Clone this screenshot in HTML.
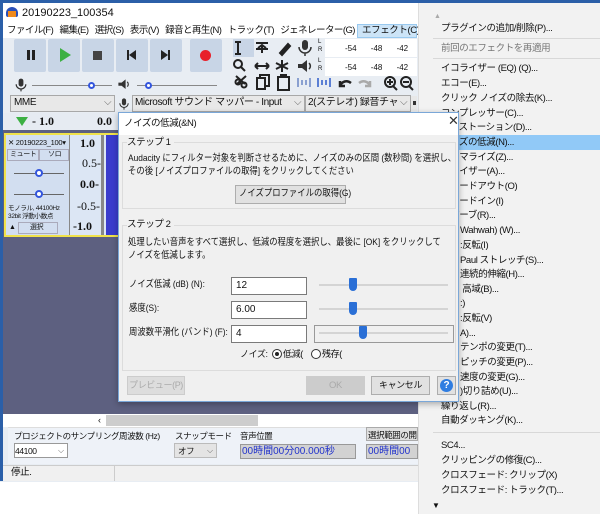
<!DOCTYPE html>
<html><head><meta charset="utf-8"><style>
*{margin:0;padding:0;box-sizing:border-box}
body{width:600px;height:514px;overflow:hidden;background:#fff;position:relative;font-family:"Liberation Sans","Noto Sans CJK JP",sans-serif;font-size:10px;color:#111}
.a{position:absolute}
.btn{position:absolute;background:#c8d5e6;border-radius:2px}
.t{position:absolute;white-space:nowrap;line-height:12px;letter-spacing:-0.4px}
.sx{letter-spacing:0;transform:scaleX(0.88);transform-origin:0 0;font-size:9.5px}
.cb{position:absolute;background:#fff;border:1px solid #a8a8a8;height:17px}
.mi{position:absolute;left:441px;font-size:9.5px;white-space:nowrap;line-height:12px;letter-spacing:-0.4px}
.sep{position:absolute;left:433px;width:167px;height:1px;background:#d8d8d8}
.inp{position:absolute;background:#fff;border:1px solid #7a7a7a;height:18px;padding-left:4px;line-height:16px;font-size:10px}
.trk{position:absolute;height:2px;background:#d4d4d4}
.th{position:absolute;width:8px;height:13px;background:#2a6fd6;border-radius:1px 1px 4px 4px}
.db{position:absolute;background:#e1e1e1;border:1px solid #adadad;text-align:center;line-height:17px;font-size:9.5px;white-space:nowrap;letter-spacing:-0.4px}
.ic{position:absolute}
</style></head><body>
<div class="a" style="left:0;top:0;width:418px;height:482px;background:#e8edf3"></div>
<div class="a" style="left:0;top:0;width:600px;height:3px;background:#2b5fa8"></div>
<div class="a" style="left:0;top:3px;width:418px;height:22px;background:#fff"></div>
<div class="a" style="left:6px;top:7px;width:12px;height:10px;border-radius:6px 6px 2px 2px;background:#2a50b8"></div>
<div class="a" style="left:8px;top:11px;width:8px;height:6px;background:#f08a1d"></div>
<div class="t" style="left:22px;top:7px;font-size:11px;letter-spacing:0">20190223_100354</div>
<div class="a" style="left:0;top:25px;width:418px;height:13px;background:#fff"></div>
<div class="t" style="left:7px;top:25px;font-size:9.5px;letter-spacing:-0.55px">ファイル(F)&nbsp;&nbsp; 編集(E)&nbsp;&nbsp; 選択(S)&nbsp;&nbsp; 表示(V)&nbsp;&nbsp; 録音と再生(N)&nbsp;&nbsp; トラック(T)&nbsp;&nbsp; ジェネレーター(G)</div>
<div class="a" style="left:357px;top:24px;width:60px;height:14px;background:#cce4f7;border:1px solid #99c9ef"></div>
<div class="t" style="left:362px;top:25px;font-size:9.5px">エフェクト(C)</div>
<div class="btn" style="left:14px;top:39px;width:32px;height:33px"></div>
<div class="btn" style="left:48px;top:39px;width:32px;height:33px"></div>
<div class="btn" style="left:82px;top:39px;width:32px;height:33px"></div>
<div class="btn" style="left:116px;top:39px;width:32px;height:33px"></div>
<div class="btn" style="left:150px;top:39px;width:32px;height:33px"></div>
<div class="btn" style="left:190px;top:39px;width:32px;height:33px"></div>
<div class="a" style="left:27px;top:50px;width:3px;height:10px;background:#222"></div><div class="a" style="left:32px;top:50px;width:3px;height:10px;background:#222"></div>
<div class="a" style="left:60px;top:48px;border-left:11px solid #3cb043;border-top:7px solid transparent;border-bottom:7px solid transparent"></div>
<div class="a" style="left:93px;top:51px;width:9px;height:9px;background:#444"></div>
<div class="a" style="left:127px;top:50px;width:2px;height:10px;background:#222"></div><div class="a" style="left:129px;top:50px;border-right:7px solid #222;border-top:5px solid transparent;border-bottom:5px solid transparent"></div>
<div class="a" style="left:161px;top:50px;border-left:7px solid #222;border-top:5px solid transparent;border-bottom:5px solid transparent"></div><div class="a" style="left:168px;top:50px;width:2px;height:10px;background:#222"></div>
<div class="a" style="left:200px;top:50px;width:11px;height:11px;border-radius:50%;background:#e8202a"></div>
<div class="a" style="left:233px;top:39px;width:21px;height:18px;background:#c8d5e6"></div>
<svg class="ic" style="left:230px;top:38px" width="190" height="58" viewBox="0 0 190 58" fill="none" stroke="#222" stroke-width="2">
<path d="M8 4v12M5 4h6M5 16h6"/>
<path d="M26 5h12M32 7v8M28 10l4-3 4 3M26 11h12"/>
<path d="M50 15l8-9 2 2-8 9z" fill="#222"/>
<circle cx="8" cy="26" r="4"/><path d="M11 29l4 4"/>
<path d="M25 28h14M25 28l3-3M25 28l3 3M39 28l-3-3M39 28l-3 3"/>
<path d="M52 22v12M46 25l12 6M46 31l12-6"/>
<circle cx="8" cy="44" r="2.5"/><circle cx="14" cy="47" r="2.5"/><path d="M6 38l9 8M16 38l-9 8"/>
<rect x="27" y="40" width="8" height="11"/><path d="M30 40v-3h9v11h-3"/>
<rect x="48" y="39" width="11" height="13"/><path d="M51 39v-2h5v2"/>
<path d="M68 40v9M80 40v9M72 42v5M76 42v5" stroke="#8aa0d0"/>
<path d="M88 40v9M100 40v9M92 42v5M96 42v5" stroke="#5b7fd4"/>
<path d="M110 48c2-5 7-6 11-3M110 43v5h5" stroke-width="2.5"/>
<path d="M140 48c-2-5-7-6-11-3M140 43v5h-5" stroke="#aaa" stroke-width="2.5"/>
<circle cx="160" cy="44" r="5"/><path d="M163 48l4 4M157 44h6M160 41v6"/>
<circle cx="176" cy="44" r="5"/><path d="M179 48l4 4M173 44h6"/>
</svg>
<svg class="ic" style="left:295px;top:38px" width="20" height="40" viewBox="0 0 20 40" fill="#333"><rect x="7" y="2" width="6" height="10" rx="3"/><path d="M4 9a6 6 0 0012 0M10 15v3" stroke="#333" fill="none" stroke-width="1.5"/><path d="M3 26h4l5-4v12l-5-4H3z"/><path d="M14 25a4 4 0 010 6" stroke="#333" fill="none" stroke-width="1.5"/></svg>
<div class="a" style="left:325px;top:39px;width:92px;height:18px;background:#fff"></div>
<div class="a" style="left:325px;top:58px;width:92px;height:18px;background:#fff"></div>
<div class="t" style="left:345px;top:43px;font-size:8px;word-spacing:12px;letter-spacing:0">-54 -48 -42</div>
<div class="t" style="left:345px;top:62px;font-size:8px;word-spacing:12px;letter-spacing:0">-54 -48 -42</div>
<div class="t" style="left:318px;top:38px;font-size:6px;line-height:8px">L<br>R</div>
<div class="t" style="left:318px;top:57px;font-size:6px;line-height:8px">L<br>R</div>
<svg class="ic" style="left:13px;top:76px" width="16" height="18" viewBox="0 0 20 20" fill="#333"><rect x="7" y="2" width="6" height="10" rx="3"/><path d="M4 9a6 6 0 0012 0M10 15v3" stroke="#333" fill="none" stroke-width="1.5"/></svg>
<div class="a" style="left:32px;top:85px;width:80px;height:1px;background:#888"></div>
<div class="a" style="left:88px;top:82px;width:7px;height:7px;border-radius:50%;border:2px solid #3355dd;background:#fff"></div>
<svg class="ic" style="left:116px;top:77px" width="16" height="16" viewBox="0 0 20 20" fill="#333"><path d="M3 7h4l5-4v12l-5-4H3z"/><path d="M14 6a4 4 0 010 6" stroke="#333" fill="none" stroke-width="1.5"/></svg>
<div class="a" style="left:137px;top:85px;width:80px;height:1px;background:#888"></div>
<div class="a" style="left:145px;top:82px;width:7px;height:7px;border-radius:50%;border:2px solid #3355dd;background:#fff"></div>
<div class="cb" style="left:10px;top:95px;width:105px;background:#e8e8e8"></div><div class="t" style="left:14px;top:97px">MME</div><div class="t" style="left:104px;top:97px;color:#666">⌵</div>
<svg class="ic" style="left:117px;top:95px" width="14" height="18" viewBox="0 0 20 20" fill="#333"><rect x="7" y="2" width="6" height="10" rx="3"/><path d="M4 9a6 6 0 0012 0M10 15v3" stroke="#333" fill="none" stroke-width="1.5"/></svg>
<div class="cb" style="left:132px;top:95px;width:173px;background:#e8e8e8"></div><div class="t" style="left:135px;top:97px">Microsoft サウンド マッパー - Input</div><div class="t" style="left:294px;top:97px;color:#666">⌵</div>
<div class="cb" style="left:305px;top:95px;width:106px;background:#e8e8e8;overflow:hidden"></div><div class="t" style="left:308px;top:97px;width:90px;overflow:hidden">2(ステレオ) 録音チャンネル</div><div class="t" style="left:400px;top:97px;color:#666">⌵</div>
<div class="a" style="left:411px;top:96px;width:6px;height:15px;background:#e8e8e8"></div><div class="a" style="left:413px;top:101px;width:3px;height:4px;background:#333"></div>
<div class="a" style="left:3px;top:113px;width:415px;height:17px;background:#e6ebf2"></div>
<div class="a" style="left:16px;top:117px;border-top:9px solid #3cb043;border-left:6px solid transparent;border-right:6px solid transparent"></div>
<div class="t" style="left:32px;top:115px;font-family:'Liberation Serif',serif;font-size:12px;font-weight:bold;letter-spacing:0">- 1.0</div>
<div class="t" style="left:97px;top:115px;font-family:'Liberation Serif',serif;font-size:12px;font-weight:bold;letter-spacing:0">0.0</div>
<div class="a" style="left:3px;top:130px;width:415px;height:284px;background:#5d6080"></div>
<div class="a" style="left:0;top:3px;width:3px;height:478px;background:#2b5fa8"></div>
<div class="a" style="left:4px;top:133px;width:352px;height:104px;border:2px solid #f0e24a;background:#dce6f4"></div>
<div class="a" style="left:6px;top:135px;width:64px;height:100px;background:#d2def0;border-right:1px solid #888"></div>
<div class="t" style="left:8px;top:137px;font-size:7.5px;letter-spacing:-0.3px">✕ 20190223_100▾</div>
<div class="a" style="left:7px;top:149px;width:32px;height:12px;border:1px solid #aab"></div><div class="t" style="left:10px;top:149px;font-size:7px">ミュート</div>
<div class="a" style="left:39px;top:149px;width:30px;height:12px;border:1px solid #aab"></div><div class="t" style="left:48px;top:149px;font-size:7px">ソロ</div>
<div class="a" style="left:14px;top:173px;width:50px;height:1px;background:#666"></div><div class="a" style="left:35px;top:169px;width:8px;height:8px;border-radius:50%;border:2px solid #3355dd;background:#fff"></div>
<div class="a" style="left:14px;top:194px;width:50px;height:1px;background:#666"></div><div class="a" style="left:35px;top:190px;width:8px;height:8px;border-radius:50%;border:2px solid #3355dd;background:#fff"></div>
<div class="t" style="left:8px;top:205px;font-size:6.5px;line-height:8px;letter-spacing:-0.3px">モノラル, 44100Hz<br>32bit 浮動小数点</div>
<div class="a" style="left:18px;top:222px;width:40px;height:12px;border:1px solid #aab"></div><div class="t" style="left:30px;top:222px;font-size:7px">選択</div>
<div class="t" style="left:9px;top:222px;font-size:7px">▲</div>
<div class="a" style="left:71px;top:135px;width:30px;height:100px;background:#dce6f4"></div>
<div class="t" style="left:80px;top:137px;font-family:'Liberation Serif',serif;font-size:12px;font-weight:bold;letter-spacing:0">1.0</div>
<div class="t" style="left:82px;top:157px;font-family:'Liberation Serif',serif;font-size:12px;letter-spacing:0">0.5-</div>
<div class="t" style="left:80px;top:178px;font-family:'Liberation Serif',serif;font-size:12px;font-weight:bold;letter-spacing:0">0.0-</div>
<div class="t" style="left:77px;top:200px;font-family:'Liberation Serif',serif;font-size:12px;letter-spacing:0">-0.5-</div>
<div class="t" style="left:73px;top:220px;font-family:'Liberation Serif',serif;font-size:12px;font-weight:bold;letter-spacing:0">-1.0</div>
<div class="a" style="left:101px;top:135px;width:3px;height:100px;background:#888"></div>
<div class="a" style="left:106px;top:135px;width:12px;height:100px;background:#3a3ccc"></div>
<div class="a" style="left:3px;top:414px;width:415px;height:13px;background:#fff"></div>
<div class="t" style="left:98px;top:414px;font-size:9px">‹</div>
<div class="a" style="left:106px;top:415px;width:152px;height:11px;background:#cdcdcd"></div>
<div class="a" style="left:8px;top:427px;width:410px;height:37px;background:#eef2f8;border-top:1px solid #ddd"></div>
<div class="t" style="left:14px;top:430px;font-size:8.5px">プロジェクトのサンプリング周波数 (Hz)</div>
<div class="a" style="left:14px;top:443px;width:54px;height:15px;background:#fff;border:1px solid #999"></div><div class="t" style="left:15px;top:445px;font-size:8.5px">44100</div><div class="t" style="left:58px;top:445px;color:#666;font-size:8px">⌵</div>
<div class="t" style="left:175px;top:430px;font-size:8.5px">スナップモード</div>
<div class="a" style="left:174px;top:443px;width:43px;height:15px;background:#e4e4e4;border:1px solid #bbb"></div><div class="t" style="left:178px;top:445px;font-size:8.5px">オフ</div><div class="t" style="left:207px;top:445px;color:#666;font-size:8px">⌵</div>
<div class="t" style="left:240px;top:430px;font-size:8.5px">音声位置</div>
<div class="a" style="left:240px;top:444px;width:116px;height:15px;background:#d2d2d2;border:1px solid #999"></div><div class="t" style="left:242px;top:446px;font-size:10px;color:#2233cc;letter-spacing:0">00時間00分00.000秒</div>
<div class="a" style="left:366px;top:427px;width:52px;height:14px;background:#e0e0e0;border:1px solid #aaa"></div><div class="t" style="left:368px;top:429px;font-size:8.5px">選択範囲の開</div>
<div class="a" style="left:366px;top:444px;width:52px;height:15px;background:#d2d2d2;border:1px solid #999"></div><div class="t" style="left:368px;top:446px;font-size:10px;color:#2233cc;letter-spacing:0">00時間00</div>
<div class="a" style="left:3px;top:465px;width:415px;height:16px;background:#f0f0f0;border-top:1px solid #ccc"></div>
<div class="a" style="left:114px;top:465px;width:1px;height:16px;background:#ccc"></div>
<div class="t" style="left:11px;top:467px;font-size:9.5px">停止.</div>
<div class="a" style="left:418px;top:3px;width:182px;height:511px;background:#f2f2f2;border-left:1px solid #ddd"></div>
<div class="t" style="left:434px;top:11px;font-size:7px;color:#aaa">▲</div>
<div class="mi" style="top:23px">プラグインの追加/削除(P)...</div>
<div class="sep" style="top:38px"></div>
<div class="mi" style="top:43px;color:#777">前回のエフェクトを再適用</div>
<div class="sep" style="top:58px"></div>
<div class="mi" style="top:63px">イコライザー (EQ) (Q)...</div>
<div class="mi" style="top:78px">エコー(E)...</div>
<div class="mi" style="top:93px">クリック ノイズの除去(K)...</div>
<div class="mi" style="top:108px">コンプレッサー(C)...</div>
<div class="mi" style="top:122px">ディストーション(D)...</div>
<div class="a" style="left:433px;top:135px;width:167px;height:15px;background:#91c9f7"></div>
<div class="mi" style="top:137px">ノイズの低減(N)...</div>
<div class="mi" style="top:152px">ノーマライズ(Z)...</div>
<div class="mi" style="top:166px">フェイザー(A)...</div>
<div class="mi" style="top:181px">フェードアウト(O)</div>
<div class="mi" style="top:196px">フェードイン(I)</div>
<div class="mi" style="top:210px">リバーブ(R)...</div>
<div class="mi" style="left:460px;top:225px">Wahwah) (W)...</div>
<div class="mi" style="left:460px;top:240px">:反転(I)</div>
<div class="mi" style="left:460px;top:255px">Paul ストレッチ(S)...</div>
<div class="mi" style="left:460px;top:269px">連続的伸縮(H)...</div>
<div class="mi" style="left:460px;top:284px">&nbsp;高域(B)...</div>
<div class="mi" style="left:460px;top:298px">:)</div>
<div class="mi" style="left:460px;top:313px">:反転(V)</div>
<div class="mi" style="left:460px;top:328px">A)...</div>
<div class="mi" style="left:460px;top:342px">テンポの変更(T)...</div>
<div class="mi" style="left:460px;top:357px">ピッチの変更(P)...</div>
<div class="mi" style="left:460px;top:372px">速度の変更(G)...</div>
<div class="mi" style="left:460px;top:386px">)切り詰め(U)...</div>
<div class="mi" style="top:401px">繰り返し(R)...</div>
<div class="mi" style="top:415px">自動ダッキング(K)...</div>
<div class="sep" style="top:432px"></div>
<div class="mi" style="top:440px">SC4...</div>
<div class="mi" style="top:455px">クリッピングの修復(C)...</div>
<div class="mi" style="top:470px">クロスフェード: クリップ(X)</div>
<div class="mi" style="top:485px">クロスフェード: トラック(T)...</div>
<div class="t" style="left:432px;top:500px;font-size:8px">▼</div>
<div class="a" style="left:118px;top:112px;width:341px;height:290px;background:#f0f0f0;border:1px solid #7aa7d8;box-shadow:0 2px 6px rgba(0,0,0,.3);overflow:hidden"></div>
<div class="a" style="left:119px;top:113px;width:339px;height:22px;background:#fff"></div>
<div class="t" style="left:124px;top:118px;font-size:9.5px">ノイズの低減(&amp;N)</div>
<div class="t" style="left:448px;top:115px;font-size:13px;color:#333">✕</div>
<div class="a" style="left:122px;top:142px;width:334px;height:67px;border:1px solid #dcdcdc"></div>
<div class="t" style="left:127px;top:137px;font-size:9.5px;background:#f0f0f0;padding-right:3px">ステップ 1</div>
<div class="t sx" style="left:128px;top:153px">Audacity にフィルター対象を判断させるために、ノイズのみの区間 (数秒間) を選択し、</div>
<div class="t sx" style="left:128px;top:166px">その後 [ノイズプロファイルの取得] をクリックしてください</div>
<div class="db" style="left:235px;top:185px;width:111px;height:19px"></div>
<div class="t sx" style="left:239px;top:188px">ノイズプロファイルの取得(G)</div>
<div class="a" style="left:122px;top:225px;width:334px;height:146px;border:1px solid #dcdcdc"></div>
<div class="t" style="left:127px;top:219px;font-size:9.5px;background:#f0f0f0;padding-right:3px">ステップ 2</div>
<div class="t sx" style="left:128px;top:237px">処理したい音声をすべて選択し、低減の程度を選択し、最後に [OK] をクリックして</div>
<div class="t sx" style="left:128px;top:250px">ノイズを低減します。</div>
<div class="t sx" style="left:129px;top:279px">ノイズ低減 (dB) (N):</div>
<div class="inp" style="left:231px;top:277px;width:76px">12</div>
<div class="trk" style="left:319px;top:284px;width:129px"></div><div class="th" style="left:349px;top:278px"></div>
<div class="t sx" style="left:129px;top:303px">感度(S):</div>
<div class="inp" style="left:231px;top:301px;width:76px">6.00</div>
<div class="trk" style="left:319px;top:308px;width:129px"></div><div class="th" style="left:349px;top:302px"></div>
<div class="t sx" style="left:129px;top:327px">周波数平滑化 (バンド) (F):</div>
<div class="inp" style="left:231px;top:325px;width:76px">4</div>
<div class="a" style="left:314px;top:325px;width:140px;height:18px;border:1px solid #999"></div>
<div class="trk" style="left:319px;top:332px;width:129px"></div><div class="th" style="left:359px;top:326px"></div>
<div class="t" style="left:240px;top:348px;font-size:9px">ノイズ:</div>
<div class="a" style="left:272px;top:349px;width:10px;height:10px;border:1px solid #333;border-radius:50%;background:#fff"></div><div class="a" style="left:275px;top:352px;width:4px;height:4px;border-radius:50%;background:#222"></div>
<div class="t" style="left:283px;top:348px;font-size:9px">低減(</div>
<div class="a" style="left:311px;top:349px;width:10px;height:10px;border:1px solid #333;border-radius:50%;background:#fff"></div>
<div class="t" style="left:322px;top:348px;font-size:9px">残存(</div>
<div class="db" style="left:127px;top:376px;width:58px;height:19px;color:#aaa;background:#ddd;border-color:#ccc;font-size:9px">プレビュー(P)</div>
<div class="db" style="left:306px;top:376px;width:59px;height:19px;color:#aaa;background:#ccc;border-color:#ccc">OK</div>
<div class="db" style="left:371px;top:376px;width:59px;height:19px;font-size:9px">キャンセル</div>
<div class="a" style="left:437px;top:376px;width:19px;height:19px;background:#e1e1e1;border:1px solid #adadad"></div>
<div class="a" style="left:440px;top:379px;width:13px;height:13px;border-radius:50%;background:#2f7de1;color:#fff;font-size:10px;font-weight:bold;text-align:center;line-height:13px">?</div>
</body></html>
